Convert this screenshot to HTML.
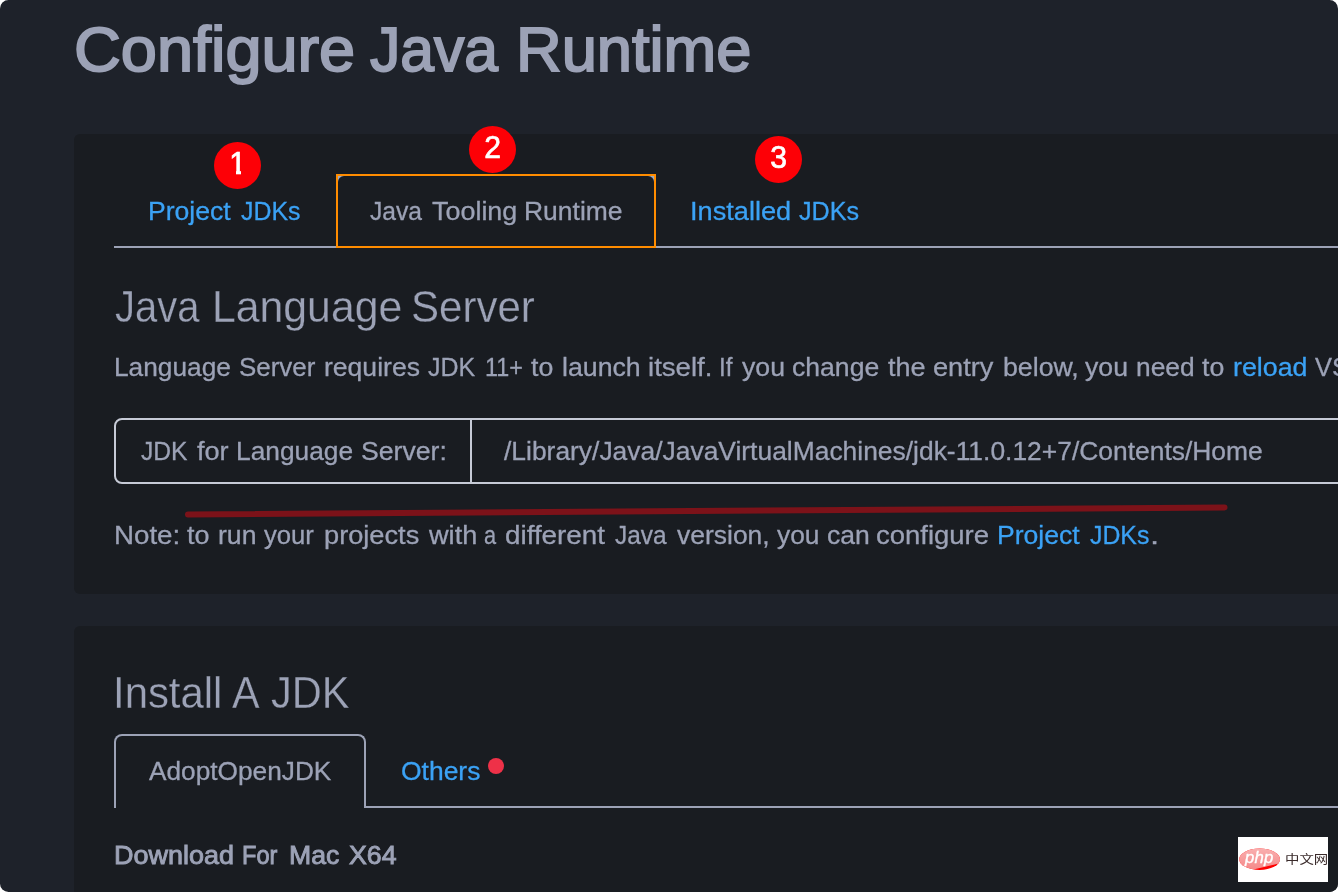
<!DOCTYPE html>
<html lang="en">
<head>
<meta charset="utf-8">
<title>Configure Java Runtime</title>
<style>
html,body{margin:0;padding:0;}
body{width:1338px;height:892px;overflow:hidden;background:#fff;position:relative;
 font-family:"Liberation Sans","Noto Sans CJK SC",sans-serif;color:#9ca2b6;}
#win{position:absolute;left:0;top:0;width:1338px;height:892px;background:#1e222a;border-radius:8.5px;overflow:hidden;}
.card{position:absolute;left:74px;width:1300px;background:#191c21;border-radius:6px;}
#card1{top:134px;height:460px;}
#card2{top:626px;height:300px;}
.t{will-change:transform;position:absolute;left:0;margin:0;white-space:nowrap;line-height:1;font-weight:normal;text-decoration:none;display:block;width:1338px;height:1em;}
.t{-webkit-text-stroke:0.3px;}
.w{position:absolute;top:0;transform-origin:0 0;white-space:nowrap;}
a{color:#3ba2f5;text-decoration:none;}
h1.t{color:#9ca2b6;-webkit-text-stroke:1.9px #9ca2b6;}
h2.t{-webkit-text-stroke:0.3px #191c21;}
#dl{-webkit-text-stroke:0.9px #9ca2b6;}
.badge{position:absolute;width:47px;height:47px;border-radius:50%;background:#fd0006;color:#fff;font-size:31.4px;text-align:center;line-height:42.6px;will-change:transform;}
.badge b{font-weight:normal;-webkit-text-stroke:0.7px #fff;position:relative;top:1px;display:inline-block;transform:scaleX(0.96);}
.badge i{position:absolute;background:#fd0006;display:block;}
#tabline{position:absolute;left:114px;top:246px;width:1300px;height:2px;background:#9ca2b6;}
#activetab{position:absolute;left:336px;top:174px;width:320px;height:74px;box-sizing:border-box;border:2px solid #ff8c00;background:#a0aac0;}
#activetab div{position:absolute;left:0;top:0;right:0;bottom:0;background:#191c21;border-radius:6px 6px 0 0;}
#group{position:absolute;left:114px;top:418px;width:1300px;height:66px;border:2px solid #c6cad6;border-radius:8px;box-sizing:border-box;}
#group .sep{position:absolute;left:354px;top:0;width:2px;height:62px;background:#c6cad6;}
#tab2{position:absolute;left:114px;top:734px;width:252px;height:74px;box-sizing:border-box;border:2px solid #9ca2b6;border-bottom:none;border-radius:8px 8px 0 0;}
#tab2line{position:absolute;left:364px;top:806px;width:1000px;height:2px;background:#9ca2b6;}
#dot{position:absolute;left:488px;top:758px;width:16px;height:16px;border-radius:50%;background:#ee3148;}
#wm{position:absolute;left:1238px;top:837px;width:90px;height:45px;background:#fff;will-change:transform;}
#wm svg{position:absolute;left:0;top:0;}
#wm .php{position:absolute;left:7.4px;top:13.2px;font-size:15.8px;line-height:1;font-style:italic;color:#fff;letter-spacing:0.2px;transform:scaleX(1.06);transform-origin:0 0;-webkit-text-stroke:0.35px #fff;}
#wm .cn{position:absolute;left:46.5px;top:16.3px;font-size:12px;line-height:1;color:#3a2b2b;font-family:"Noto Sans CJK SC","Liberation Sans",sans-serif;transform:scaleX(1.2);transform-origin:0 0;}
</style>
</head>
<body>
<div id="win">
 <div class="card" id="card1"></div>
 <div class="card" id="card2"></div>

 <div id="tabline"></div>
 <div id="activetab"><div></div></div>
 <div class="badge" id="b1" style="left:213.7px;top:141.8px;"><b style="left:0.6px;top:1.3px">1</b><i style="left:15px;top:27px;width:7.1px;height:7px"></i><i style="left:27.3px;top:27px;width:6px;height:7px"></i></div>
 <div class="badge" id="b2" style="left:468.8px;top:125.8px;"><b>2</b></div>
 <div class="badge" id="b3" style="left:755.3px;top:135.6px;"><b>3</b></div>

 <div id="group"><div class="sep"></div></div>
 <svg id="redline" style="position:absolute;left:0;top:0" width="1338" height="892"><path d="M188 514.5 L1224.5 507.5" stroke="#7c1219" stroke-width="6" stroke-linecap="round" fill="none"/></svg>
 <div id="tab2"></div><div id="tab2line"></div>
 <div id="dot"></div>

 <h1 class="t" id="title" style="top:18.1px;font-size:62.5px;"><span class="w" style="left:73.9px;transform:scaleX(1.0376)">Configure</span> <span class="w" style="left:370.3px;transform:scaleX(0.9693)">Java</span> <span class="w" style="left:516.2px;transform:scaleX(1.0113)">Runtime</span></h1>
 <a class="t" id="tabA" style="top:198px;font-size:26px;"><span class="w" style="left:147.7px;transform:scaleX(1.0226)">Project</span> <span class="w" style="left:240.9px;transform:scaleX(0.9579)">JDKs</span></a>
 <span class="t" id="tabB" style="top:198px;font-size:26px;"><span class="w" style="left:370.2px;transform:scaleX(0.9484)">Java</span> <span class="w" style="left:431.7px;transform:scaleX(1.0354)">Tooling</span> <span class="w" style="left:523.7px;transform:scaleX(1.0174)">Runtime</span></span>
 <a class="t" id="tabC" style="top:198px;font-size:26px;"><span class="w" style="left:690.2px;transform:scaleX(1.0452)">Installed</span> <span class="w" style="left:798.8px;transform:scaleX(0.9675)">JDKs</span></a>
 <h2 class="t" id="h2a" style="top:283.9px;font-size:45px;"><span class="w" style="left:114.5px;transform:scaleX(0.8873)">Java</span> <span class="w" style="left:211.8px;transform:scaleX(0.9501)">Language</span> <span class="w" style="left:411.4px;transform:scaleX(0.9337)">Server</span></h2>
 <div class="t" id="p1" style="top:354px;font-size:26px;"><span class="w" style="left:113.6px;transform:scaleX(1.0104)">Language</span> <span class="w" style="left:238.6px;transform:scaleX(0.9958)">Server</span> <span class="w" style="left:323.8px;transform:scaleX(1.0212)">requires</span> <span class="w" style="left:428.0px;transform:scaleX(0.9603)">JDK</span> <span class="w" style="left:485.4px;transform:scaleX(0.8977)">11+</span> <span class="w" style="left:530.7px;transform:scaleX(1.0272)">to</span> <span class="w" style="left:561.6px;transform:scaleX(1.0276)">launch</span> <span class="w" style="left:647.9px;transform:scaleX(1.0616)">itself.</span> <span class="w" style="left:718.8px;transform:scaleX(0.9302)">If</span> <span class="w" style="left:742.0px;transform:scaleX(1.0257)">you</span> <span class="w" style="left:792.1px;transform:scaleX(1.0222)">change</span> <span class="w" style="left:887.8px;transform:scaleX(1.0369)">the</span> <span class="w" style="left:932.6px;transform:scaleX(1.0457)">entry</span> <span class="w" style="left:1002.6px;transform:scaleX(1.0270)">below,</span> <span class="w" style="left:1085.0px;transform:scaleX(1.0257)">you</span> <span class="w" style="left:1135.5px;transform:scaleX(1.0130)">need</span> <span class="w" style="left:1202.0px;transform:scaleX(1.0272)">to</span> <a class="w" style="left:1233.0px;transform:scaleX(1.0313)">reload</a> <span class="w" style="left:1315.4px;transform:scaleX(0.9784)">VS</span> <span class="w" style="left:1357.0px;transform:scaleX(1.0215)">Code</span> <span class="w" style="left:1430.0px;transform:scaleX(1.0366)">to</span> <span class="w" style="left:1460.0px;transform:scaleX(1.0303)">make</span> <span class="w" style="left:1533.0px;transform:scaleX(1.0175)">it</span> <span class="w" style="left:1555.0px;transform:scaleX(1.0363)">effective.</span></div>
 <span class="t" id="lblA" style="top:438px;font-size:26px;"><span class="w" style="left:140.8px;transform:scaleX(0.9462)">JDK</span> <span class="w" style="left:196.7px;transform:scaleX(1.0429)">for</span> <span class="w" style="left:236.1px;transform:scaleX(1.0122)">Language</span> <span class="w" style="left:361.1px;transform:scaleX(1.0239)">Server:</span></span>
 <span class="t" id="lblB" style="top:438px;font-size:26px;"><span class="w" style="left:504.0px;transform:scaleX(1.0158)">/Library/Java/JavaVirtualMachines/jdk-11.0.12+7/Contents/Home</span></span>
 <div class="t" id="p2" style="top:522px;font-size:26px;"><span class="w" style="left:113.5px;transform:scaleX(1.0653)">Note:</span> <span class="w" style="left:186.7px;transform:scaleX(1.0366)">to</span> <span class="w" style="left:217.7px;transform:scaleX(1.0223)">run</span> <span class="w" style="left:264.3px;transform:scaleX(0.9859)">your</span> <span class="w" style="left:323.8px;transform:scaleX(1.0462)">projects</span> <span class="w" style="left:429.0px;transform:scaleX(1.0442)">with</span> <span class="w" style="left:484.4px;transform:scaleX(0.8357)">a</span> <span class="w" style="left:505.4px;transform:scaleX(1.0702)">different</span> <span class="w" style="left:615.2px;transform:scaleX(0.9394)">Java</span> <span class="w" style="left:676.8px;transform:scaleX(1.0179)">version,</span> <span class="w" style="left:777.0px;transform:scaleX(1.0133)">you</span> <span class="w" style="left:826.7px;transform:scaleX(1.0213)">can</span> <span class="w" style="left:876.4px;transform:scaleX(1.0569)">configure</span> <a class="w" style="left:997.0px;transform:scaleX(1.0226)">Project</a> <a class="w" style="left:1090.2px;transform:scaleX(0.9546)">JDKs</a> <span class="w" style="left:1149.7px;transform:scaleX(1.2667)">.</span></div>
 <h2 class="t" id="h2b" style="top:670.2px;font-size:45px;"><span class="w" style="left:112.5px;transform:scaleX(0.9307)">Install</span> <span class="w" style="left:232.0px;transform:scaleX(0.9200)">A</span> <span class="w" style="left:270.9px;transform:scaleX(0.9236)">JDK</span></h2>
 <span class="t" id="tabD" style="top:758px;font-size:26px;"><span class="w" style="left:149.0px;transform:scaleX(1.0092)">AdoptOpenJDK</span></span>
 <a class="t" id="tabE" style="top:758px;font-size:26px;"><span class="w" style="left:401.3px;transform:scaleX(1.0178)">Others</span></a>
 <div class="t" id="dl" style="top:842px;font-size:26px;"><span class="w" style="left:113.9px;transform:scaleX(1.0368)">Download</span> <span class="w" style="left:242.1px;transform:scaleX(0.9052)">For</span> <span class="w" style="left:288.5px;transform:scaleX(1.0230)">Mac</span> <span class="w" style="left:349.1px;transform:scaleX(1.0262)">X64</span></div>

 <div id="wm"><svg width="90" height="45" viewBox="0 0 90 45"><defs><linearGradient id="pg" gradientUnits="userSpaceOnUse" x1="0" y1="11" x2="0" y2="33"><stop offset="0" stop-color="#f9b0b0"/><stop offset="1" stop-color="#f58888"/></linearGradient><clipPath id="ec"><ellipse cx="21.6" cy="22.3" rx="20.4" ry="10.7"/></clipPath></defs><g clip-path="url(#ec)"><rect x="0" y="10" width="45" height="25" fill="#fe0000"/><polygon points="0,0 45,0 45,25.6 12,33.3 0,36" fill="url(#pg)"/></g></svg><span class="php">php</span><span class="cn">中文网</span></div>
</div>
</body>
</html>
